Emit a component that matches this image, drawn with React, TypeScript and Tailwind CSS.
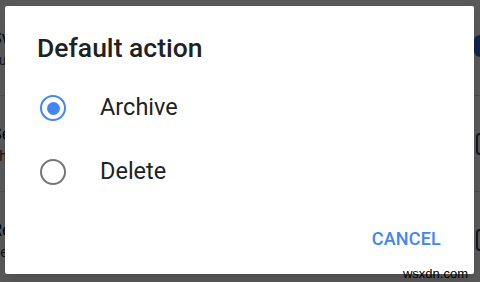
import React, { useState } from 'react';

const rows = [
  { title: 'Swipe actions', sub: 'Turn on to archive', control: 'switch' },
  { title: 'Sender image', sub: 'Show sender image', control: 'box' },
  { title: 'Reply all', sub: 'Default reply action', control: 'box' },
];

const options = ['Archive', 'Delete'];

const App: React.FC = () => {
  const [selected, setSelected] = useState('Archive');

  return (
    <div className="relative w-[480px] h-[282px] overflow-hidden bg-white" style={{ fontFamily: 'Roboto, "Noto Sans", sans-serif' }}>
      {/* Settings list behind the dialog */}
      <div className="flex flex-col">
        {rows.map((r, i) => (
          <div key={r.title} className={`h-[96px] flex items-center justify-between ${i < rows.length - 1 ? 'border-b border-gray-300' : ''}`}>
            <div className="flex flex-col -ml-[9px]">
              <span className="text-[18px] text-gray-900 leading-6">{r.title}</span>
              <span className="text-[14px] text-gray-700 leading-5">{r.sub}</span>
            </div>
            {r.control === 'switch' ? (
              <div className="w-[14px] h-[22px] rounded-l-md bg-[#3367d6] mr-[-8px] self-start mt-[35px]" />
            ) : (
              <div className="w-[14px] h-[22px] rounded border-2 border-gray-700 mr-[-10px]" />
            )}
          </div>
        ))}
      </div>

      {/* Scrim */}
      <div className="absolute inset-0 bg-black/65" />

      {/* Dialog */}
      <div className="absolute left-[5px] top-[6px] w-[469px] h-[268px] bg-white rounded-[2px] shadow-lg flex flex-col">
        <h2 className="pl-[32px] pt-[26px] text-[26.5px] leading-[32px] font-medium text-[#212121]">Default action</h2>
        <div className="flex flex-col mt-[12px]">
          {options.map(o => {
            const on = selected === o;
            return (
              <button key={o} onClick={() => setSelected(o)} className="h-[64px] flex items-center pl-[35px] text-left">
                <span className={`w-[26px] h-[26px] rounded-full border-[2.5px] flex items-center justify-center ${on ? 'border-[#4285f4]' : 'border-[#757575]'}`}>
                  {on && <span className="w-[13px] h-[13px] rounded-full bg-[#4285f4]" />}
                </span>
                <span className="ml-[34px] text-[23.5px] text-[#212121]">{o}</span>
              </button>
            );
          })}
        </div>
        <div className="flex-1 flex items-end justify-end pr-[33px] pb-[24px]">
          <button className="text-[18px] leading-[22px] font-medium text-[#4285f4] tracking-[0.2px]">CANCEL</button>
        </div>
      </div>

      {/* Watermark */}
      <span className="absolute right-[12px] bottom-[0px] text-[13px] leading-[16px] text-black" style={{ fontFamily: '"Liberation Sans", Arial, sans-serif' }}>wsxdn.com</span>
    </div>
  );
};

export default App;
